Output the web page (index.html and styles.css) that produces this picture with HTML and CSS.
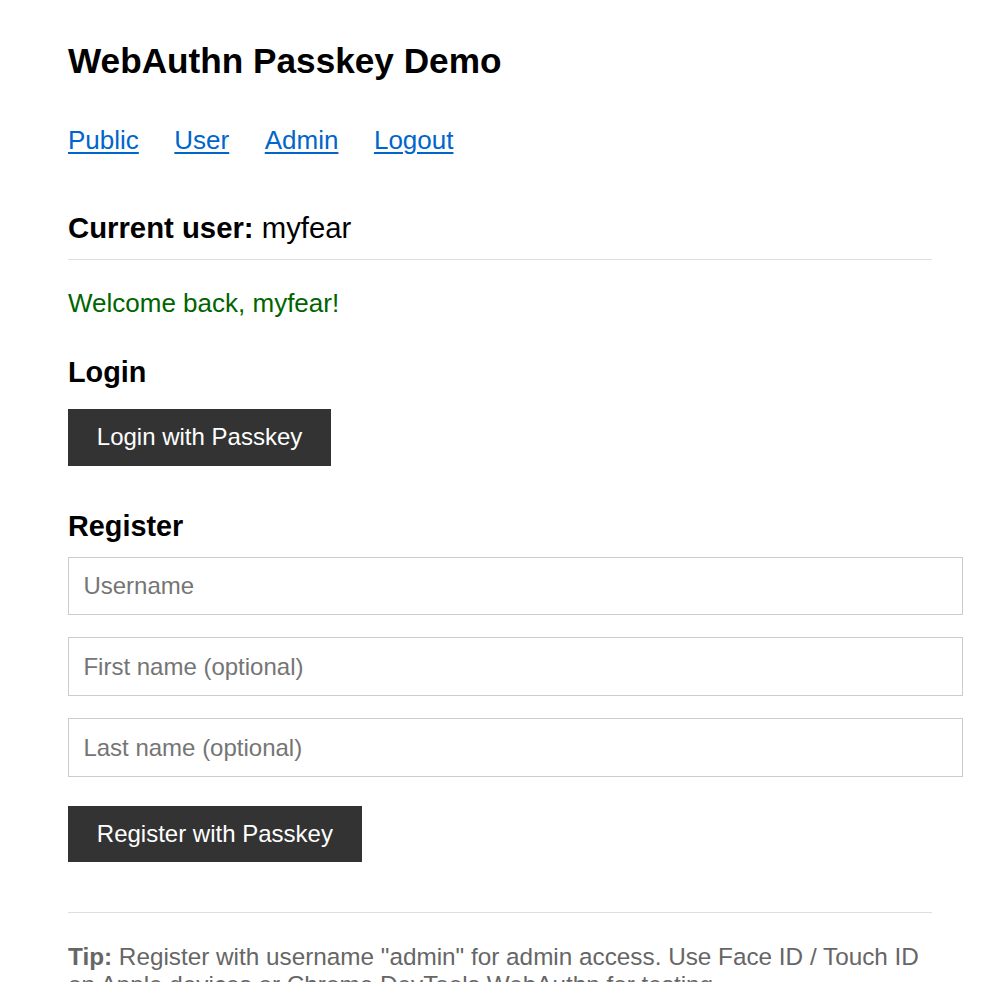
FILE: index.html
```html
<!DOCTYPE html>
<html lang="en">
<head>
<meta charset="utf-8">
<title>WebAuthn Passkey Demo</title>
<link rel="stylesheet" href="styles.css">
</head>
<body>
<div class="page">
  <h1 class="title">WebAuthn Passkey Demo</h1>
  <nav class="nav">
    <a href="#">Public</a>
    <a href="#">User</a>
    <a href="#">Admin</a>
    <a href="#">Logout</a>
  </nav>
  <p class="current"><strong>Current user:</strong> myfear</p>
  <hr class="rule">
  <p class="welcome">Welcome back, myfear!</p>
  <h2 class="section-title">Login</h2>
  <button class="btn btn-login" type="button">Login with Passkey</button>
  <h2 class="section-title section-title-tight">Register</h2>
  <form class="register" onsubmit="return false">
    <input class="field" type="text" placeholder="Username">
    <input class="field" type="text" placeholder="First name (optional)">
    <input class="field" type="text" placeholder="Last name (optional)">
    <button class="btn btn-register" type="button">Register with Passkey</button>
  </form>
  <hr class="rule rule-bottom">
  <p class="tip"><strong>Tip:</strong> Register with username "admin" for admin access. Use Face ID / Touch ID on Apple devices or Chrome DevTools WebAuthn for testing.</p>
</div>
</body>
</html>
```
FILE: styles.css
```css
html, body {
  margin: 0;
  padding: 0;
  background: #fff;
}

body {
  font-family: "Liberation Sans", Arial, Helvetica, sans-serif;
  color: #000;
}

.page {
  width: 864px;
  margin: 0 0 0 68px;
  padding-top: 41px;
}

.title {
  font-size: 35.2px;
  line-height: 40px;
  font-weight: bold;
  margin: 0 0 44px;
}

.nav {
  display: flex;
  gap: 35.5px;
  font-size: 26px;
  line-height: 30px;
  margin-bottom: 56px;
}

.nav a {
  color: #0066cc;
  text-decoration: underline;
  text-underline-offset: 3px;
  text-decoration-thickness: 2px;
}

.current {
  font-size: 29.3px;
  line-height: 33px;
  margin: 0 0 15px;
}

.rule {
  border: 0;
  border-top: 1px solid #dddddd;
  height: 0;
  margin: 0 0 28px;
}

.welcome {
  font-size: 26px;
  line-height: 30px;
  color: #006400;
  margin: 0 0 38px;
}

.section-title {
  font-size: 28.8px;
  line-height: 33px;
  font-weight: bold;
  margin: 0 0 20px;
}

.section-title-tight {
  margin-bottom: 14px;
}

.btn {
  display: block;
  font-family: "Liberation Sans", Arial, Helvetica, sans-serif;
  font-size: 24px;
  line-height: 27.9px;
  padding: 14.4px 28.8px;
  background: #333333;
  color: #ffffff;
  border: 0;
  border-radius: 0;
  cursor: pointer;
}

.btn-login {
  margin-bottom: 44px;
}

.register {
  display: flex;
  flex-direction: column;
  align-items: flex-start;
  margin: 0;
}

.field {
  box-sizing: content-box;
  width: 100%;
  font-family: "Liberation Sans", Arial, Helvetica, sans-serif;
  font-size: 24px;
  line-height: 28px;
  height: 28px;
  padding: 14.4px;
  border: 1px solid #cccccc;
  border-radius: 0;
  margin: 0 0 22px;
  color: #000;
  background: #fff;
  outline: none;
}

.field::placeholder {
  color: #757575;
}

.btn-register {
  margin-top: 6.6px;
  margin-bottom: 50px;
}

.rule-bottom {
  margin-bottom: 30px;
}

.tip {
  font-size: 24.3px;
  line-height: 28px;
  color: #666666;
  margin: 0;
}
```
